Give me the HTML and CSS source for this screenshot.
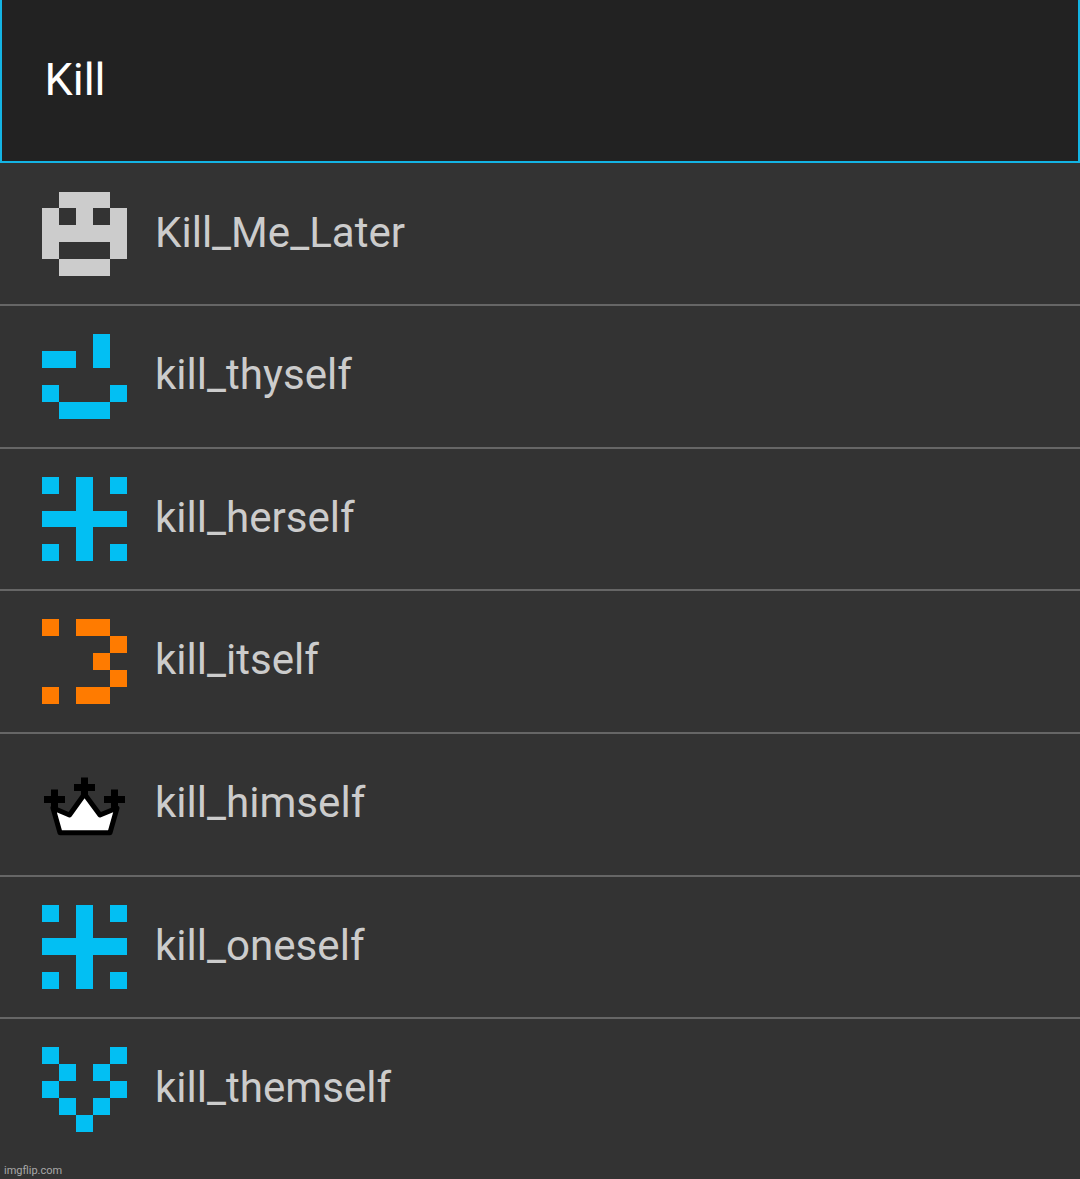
FILE: index.html
```html
<!DOCTYPE html>
<html lang="en">
<head>
  <meta charset="UTF-8">
  <title>User Search</title>
  <link rel="stylesheet" href="styles.css">
</head>
<body>
  <div class="search">
    <input class="search-input" type="text" value="Kill" spellcheck="false" aria-label="Search">
  </div>

  <ul class="results">
    <li class="result first">
      <svg class="avatar gray" viewBox="0 0 85 85"><path fill-rule="evenodd" d="M17 0H68V16H85V67H68V84H17V67H0V16H17ZM17 16V33H34V16ZM51 16V33H68V16ZM17 50V67H68V50Z"/></svg>
      <span class="name">Kill_Me_Later</span>
    </li>
    <li class="result">
      <svg class="avatar blue" viewBox="0 0 85 85"><path d="M51 0H68V34H51ZM0 17H34V34H0ZM0 51H17V68H0ZM68 51H85V68H68ZM17 68H68V85H17Z"/></svg>
      <span class="name">kill_thyself</span>
    </li>
    <li class="result short">
      <svg class="avatar blue" viewBox="0 0 85 85"><path d="M0 0H17V17H0ZM68 0H85V17H68ZM34 0H51V34H85V50H51V84H34V50H0V34H34ZM0 67H17V84H0ZM68 67H85V84H68Z"/></svg>
      <span class="name">kill_herself</span>
    </li>
    <li class="result">
      <svg class="avatar orange" viewBox="0 0 85 85"><path d="M0 0H17V17H0ZM34 0H68V17H34ZM68 17H85V34H68ZM51 34H68V51H51ZM68 51H85V68H68ZM0 68H17V85H0ZM34 68H68V85H34Z"/></svg>
      <span class="name">kill_itself</span>
    </li>
    <li class="result">
      <!-- Crown -->
      <svg class="avatar crown" viewBox="0 0 85 85">
        <path class="crown-body" d="M11 46L27.5 53L42.5 32L58 53L75 46L68 70.8H18Z"/>
        <path d="M39 15.5H46V22H53V29H46V35H39V29H32V22H39ZM9 27.5H16V34H23V41H16V47H9V41H2V34H9ZM69 27.5H76V34H83V41H76V47H69V41H62V34H69Z"/>
      </svg>
      <span class="name">kill_himself</span>
    </li>
    <li class="result short">
      <svg class="avatar blue" viewBox="0 0 85 85"><path d="M0 0H17V17H0ZM68 0H85V17H68ZM34 0H51V33H85V50H51V84H34V50H0V33H34ZM0 67H17V84H0ZM68 67H85V84H68Z"/></svg>
      <span class="name">kill_oneself</span>
    </li>
    <li class="result last">
      <svg class="avatar blue" viewBox="0 0 85 85"><path d="M0 0H17V17H0ZM68 0H85V17H68ZM17 17H34V34H17ZM51 17H68V34H51ZM0 34H17V51H0ZM68 34H85V51H68ZM17 51H34V68H17ZM51 51H68V68H51ZM34 68H51V85H34Z"/></svg>
      <span class="name">kill_themself</span>
    </li>
  </ul>

  <div class="watermark">imgflip.com</div>
</body>
</html>
```

FILE: styles.css
```css
* {
  box-sizing: border-box;
}
body {
  margin: 0;
  height: 1179px;
  overflow: hidden;
  display: flex;
  flex-direction: column;
  background: #333;
  font-family: Roboto, sans-serif;
}
.search {
  height: 163px;
  background: #222;
  border: 2px solid #14b4e4;
  border-top: none;
}
.search-input {
  display: block;
  width: 100%;
  height: 159px;
  padding: 0 42.5px;
  border: none;
  outline: none;
  background: transparent;
  color: #fff;
  font-family: inherit;
  font-size: 45px;
}
.results {
  flex: 1;
  margin: 0;
  padding: 0;
  list-style: none;
}
.result {
  display: flex;
  align-items: flex-start;
  gap: 28px;
  height: 143px;
  padding: 28px 42px 0;
  border-bottom: 2px solid #666;
}
.result.first {
  padding-top: 29px;
}
.result.short {
  height: 142px;
}
.result.last {
  border-bottom: none;
}
.avatar {
  flex: none;
  width: 85px;
  height: 85px;
  shape-rendering: crispEdges;
}
.gray {
  fill: #ccc;
}
.blue {
  fill: #02bff3;
}
.orange {
  fill: #ff7b00;
}
.crown {
  fill: #000;
  shape-rendering: auto;
}
.crown-body {
  fill: #fff;
  stroke: #000;
  stroke-width: 5;
  stroke-linejoin: round;
}
.name {
  color: #ccc;
  font-size: 42.1px;
  line-height: 82px;
}
/* Site credit in the bottom corner */
.watermark {
  padding: 0 4px 2px;
  color: #a8a8a8;
  font-size: 11px;
  line-height: 13px;
}
```
